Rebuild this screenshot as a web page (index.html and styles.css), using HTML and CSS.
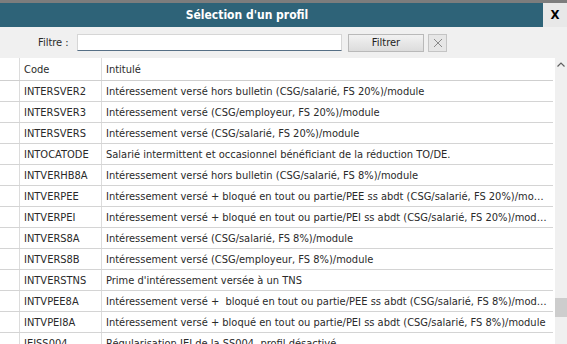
FILE: index.html
```html
<!DOCTYPE html>
<html lang="fr">
<head>
    <meta charset="UTF-8">
    <title>Sélection d'un profil</title>
    <link rel="stylesheet" href="styles.css">
</head>
<body>
    <div class="dialog">
        <div class="topline"></div>
        <div class="titlebar">
            <div class="title">Sélection d'un profil</div>
            <div class="close">X</div>
        </div>

        <div class="filterbar">
            <label for="filtre">Filtre :</label>
            <input type="text" id="filtre" class="filter-input">
            <button class="btn-filter">Filtrer</button>
            <button class="btn-clear">
                <svg width="10" height="10" viewBox="0 0 10 10"><path d="M1 1L9 9M9 1L1 9" stroke="#8a8a8a" stroke-width="1"/></svg>
            </button>
        </div>

        <div class="list">
            <div class="grid">
                <table>
                    <thead>
                        <tr>
                            <th class="sel"></th>
                            <th class="code">Code</th>
                            <th>Intitulé</th>
                        </tr>
                    </thead>
                    <tbody>
                        <tr><td class="sel"></td><td>INTERSVER2</td><td>Intéressement versé hors bulletin (CSG/salarié, FS 20%)/module</td></tr>
                        <tr><td class="sel"></td><td>INTERSVER3</td><td>Intéressement versé (CSG/employeur, FS 20%)/module</td></tr>
                        <tr><td class="sel"></td><td>INTERSVERS</td><td>Intéressement versé (CSG/salarié, FS 20%)/module</td></tr>
                        <tr><td class="sel"></td><td>INTOCATODE</td><td>Salarié intermittent et occasionnel bénéficiant de la réduction TO/DE.</td></tr>
                        <tr><td class="sel"></td><td>INTVERHB8A</td><td>Intéressement versé hors bulletin (CSG/salarié, FS 8%)/module</td></tr>
                        <tr><td class="sel"></td><td>INTVERPEE</td><td>Intéressement versé + bloqué en tout ou partie/PEE ss abdt (CSG/salarié, FS 20%)/module</td></tr>
                        <tr><td class="sel"></td><td>INTVERPEI</td><td>Intéressement versé + bloqué en tout ou partie/PEI ss abdt (CSG/salarié, FS 20%)/module</td></tr>
                        <tr><td class="sel"></td><td>INTVERS8A</td><td>Intéressement versé (CSG/salarié, FS 8%)/module</td></tr>
                        <tr><td class="sel"></td><td>INTVERS8B</td><td>Intéressement versé (CSG/employeur, FS 8%)/module</td></tr>
                        <tr><td class="sel"></td><td>INTVERSTNS</td><td>Prime d'intéressement versée à un TNS</td></tr>
                        <tr><td class="sel"></td><td>INTVPEE8A</td><td>Intéressement versé +&nbsp; bloqué en tout ou partie/PEE ss abdt (CSG/salarié, FS 8%)/module</td></tr>
                        <tr><td class="sel"></td><td>INTVPEI8A</td><td>Intéressement versé + bloqué en tout ou partie/PEI ss abdt (CSG/salarié, FS 8%)/module</td></tr>
                        <tr><td class="sel"></td><td>JEISS004</td><td>Régularisation JEI de la SS004, profil désactivé</td></tr>
                    </tbody>
                </table>
            </div>
            <div class="scrollbar">
                <svg class="arrow" width="8" height="5" viewBox="0 0 8 5"><path d="M0.5 4.5L4 1L7.5 4.5" fill="none" stroke="#606060" stroke-width="1.2"/></svg>
                <div class="thumb"></div>
            </div>
        </div>
    </div>
</body>
</html>
```

FILE: styles.css
```css
body {
    margin: 0;
    background-color: #f0f0f0;
    font-family: "DejaVu Sans Condensed", "DejaVu Sans", sans-serif;
    font-size: 11px;
    color: #2a2a2a;
    overflow: hidden;
}

.dialog {
    width: 567px;
    height: 344px;
    overflow: hidden;
}

.topline {
    height: 3px;
    background-color: #7d7d7d;
}

.titlebar {
    display: flex;
    height: 24px;
}

.title {
    flex: 1;
    background-color: #2e6378;
    color: #ffffff;
    font-weight: bold;
    font-size: 12px;
    text-align: center;
    line-height: 25px;
    padding-right: 49px;
}

.close {
    width: 24px;
    background-color: #e8e8e8;
    color: #000;
    font-weight: bold;
    font-size: 13px;
    text-align: center;
    line-height: 24px;
}

.filterbar {
    display: flex;
    align-items: center;
    height: 31px;
    padding-left: 38px;
}

.filterbar label {
    width: 39px;
}

.filter-input {
    width: 265px;
    height: 17px;
    box-sizing: border-box;
    border: 1px solid #d6d6d6;
    border-bottom-color: #566f86;
    background: #fff;
    padding: 0 3px;
    margin: 0;
}

.btn-filter {
    margin-left: 6px;
    width: 76px;
    height: 18px;
    border: 1px solid #b9b9b9;
    background: linear-gradient(#f2f2f2, #dcdcdc);
    font-family: inherit;
    font-size: 11px;
    color: #222;
    padding: 0;
}

.btn-clear {
    margin-left: 4px;
    width: 19px;
    height: 18px;
    border: 1px solid #c4c4c4;
    background: #e6e6e6;
    padding: 0;
    display: flex;
    align-items: center;
    justify-content: center;
}

.list {
    display: flex;
}

.grid {
    width: 555px;
    height: 286px;
    background-color: #ffffff;
    overflow: hidden;
}

table {
    width: 553px;
    border-collapse: collapse;
    table-layout: fixed;
}

th, td {
    text-align: left;
    font-weight: normal;
    padding: 0 4px;
    white-space: nowrap;
    overflow: hidden;
    text-overflow: ellipsis;
    border-bottom: 1px solid #d4d4d4;
    border-left: 1px solid #dcdcdc;
}

th {
    height: 22px;
    border-bottom-color: #cfcfcf;
}

td {
    height: 20px;
}

.sel {
    width: 19px;
    padding: 0;
    border-left: none;
}

th.code {
    width: 73px;
}

.scrollbar {
    position: relative;
    width: 12px;
    height: 286px;
    background-color: #f0f0f0;
}

.arrow {
    position: absolute;
    left: 2px;
    top: 4px;
}

.thumb {
    position: absolute;
    left: 0;
    top: 240px;
    width: 12px;
    height: 19px;
    background-color: #cdcdcd;
}
```
